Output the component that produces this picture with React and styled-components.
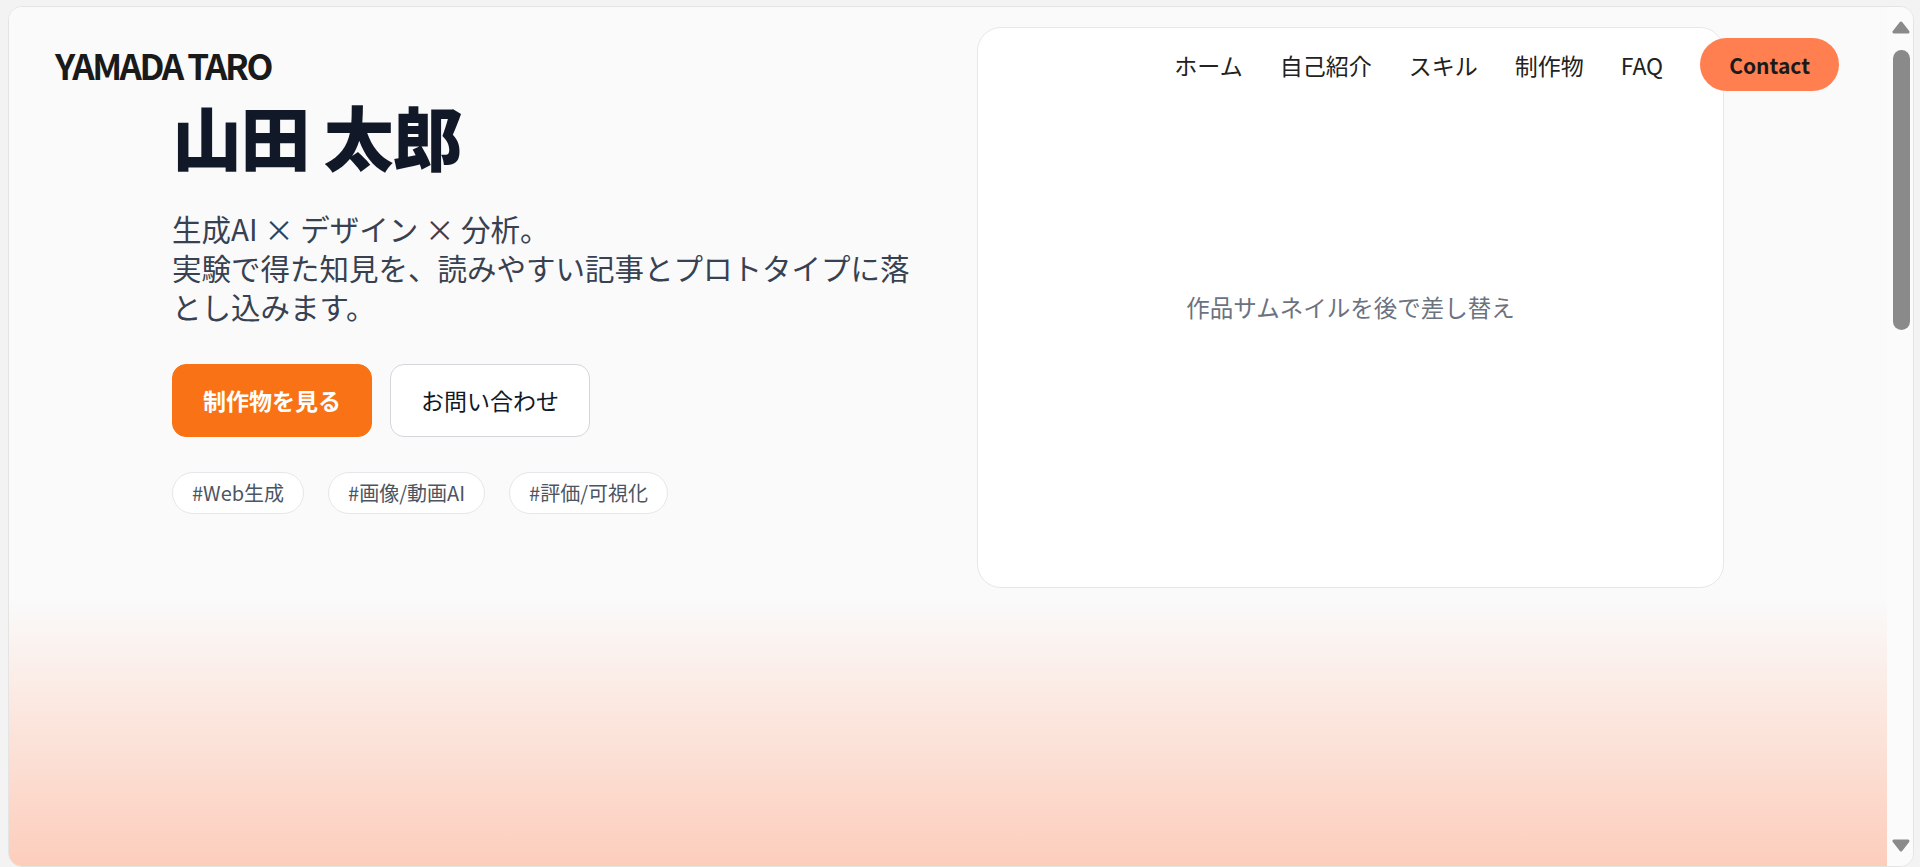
import React from "react";
import styled, { createGlobalStyle, css } from "styled-components";

const GlobalStyle = createGlobalStyle`
  html, body {
    margin: 0;
    height: 100%;
  }
  body {
    background: #f3f3f3;
    font-family: "Noto Sans CJK JP", "Noto Sans", sans-serif;
    overflow: hidden;
  }
  #root {
    height: 100%;
  }
`;

const Frame = styled.div`
  box-sizing: border-box;
  height: calc(100vh - 6px);
  margin: 6px 6px 0 8px;
  border: 1px solid #e4e4e4;
  border-radius: 14px;
  overflow: hidden;
  display: flex;
  background: #fafafa;
`;

const Viewport = styled.main`
  flex: 1;
  position: relative;
  overflow: hidden;
  background: linear-gradient(180deg, #fafafa 0, #fafafa 593px, #fdcdbb 860px);
`;

const Header = styled.header`
  position: absolute;
  top: 0;
  left: 0;
  right: 0;
  z-index: 2;
  display: flex;
  align-items: center;
  justify-content: space-between;
  padding: 31px 48px 0 46px;
`;

const Logo = styled.div`
  font-size: 35px;
  font-weight: 700;
  letter-spacing: -0.07em;
  color: #1a1a1a;
  line-height: 1;
`;

const Nav = styled.nav`
  display: flex;
  align-items: center;
  gap: 37px;
`;

const NavLink = styled.a`
  font-size: 23px;
  color: #222;
  text-decoration: none;
`;

const ContactButton = styled.a`
  display: inline-flex;
  align-items: center;
  height: 53px;
  padding: 0 29px;
  border-radius: 999px;
  background: #ff7f50;
  color: #1a1a1a;
  font-size: 21px;
  font-weight: 700;
  text-decoration: none;
`;

const Hero = styled.section`
  display: grid;
  grid-template-columns: 747px 747px;
  justify-content: center;
  gap: 58px;
  align-items: center;
  padding-top: 20px;
`;

const Intro = styled.div`
  display: flex;
  flex-direction: column;
  align-items: flex-start;
`;

const Title = styled.h1`
  margin: 0 0 38px;
  font-size: 70px;
  line-height: 70px;
  font-weight: 800;
  letter-spacing: -0.02em;
  color: #111827;
`;

const Lead = styled.p`
  margin: 0 0 38px;
  font-size: 29.5px;
  line-height: 39px;
  color: #374151;
`;

const Actions = styled.div`
  display: flex;
  gap: 18px;
  margin-bottom: 35px;
`;

const Button = styled.a`
  box-sizing: border-box;
  display: inline-flex;
  align-items: center;
  height: 73px;
  padding: 0 30px;
  border-radius: 14px;
  font-size: 23px;
  text-decoration: none;
  border: 1px solid #d4d6dc;
  background: #fff;
  color: #111827;

  ${props => props.primary && css`
    border-color: #f97316;
    background: #f97316;
    color: #fff;
    font-weight: 700;
  `}
`;

const Tags = styled.div`
  display: flex;
  gap: 24px;
`;

const Tag = styled.span`
  box-sizing: border-box;
  display: inline-flex;
  align-items: center;
  height: 42px;
  padding: 0 19px;
  border-radius: 999px;
  border: 1px solid #e5e7eb;
  background: #fff;
  color: #4b5563;
  font-size: 20px;
`;

const Thumb = styled.div`
  aspect-ratio: 4 / 3;
  display: flex;
  align-items: center;
  justify-content: center;
  background: #fff;
  border: 1px solid #e5e7eb;
  border-radius: 24px;
  color: #6b7280;
  font-size: 23.5px;
`;

const Scrollbar = styled.div`
  width: 26px;
  display: flex;
  flex-direction: column;
  align-items: center;
  padding: 14px 0 14px 2px;
  box-sizing: border-box;
  background: #fbfbfb;
`;

const ScrollThumb = styled.div`
  width: 17px;
  height: 280px;
  margin-top: 16px;
  border-radius: 9px;
  background: #8a8a8a;
`;

const Spacer = styled.div`
  flex: 1;
`;

const Arrow = ({ down }) => (
  <svg width="18" height="13" viewBox="0 0 18 13">
    <polygon
      points={down ? "2,2 16,2 9,11" : "2,11 16,11 9,2"}
      fill="#8a8a8a"
      stroke="#8a8a8a"
      strokeWidth="3"
      strokeLinejoin="round"
    />
  </svg>
);

const navItems = ["ホーム", "自己紹介", "スキル", "制作物", "FAQ"];
const tags = ["#Web生成", "#画像/動画AI", "#評価/可視化"];

export default function App() {
  return (
    <>
      <GlobalStyle />
      <Frame>
        <Viewport>
          <Header>
            <Logo>YAMADA TARO</Logo>
            <Nav>
              {navItems.map(item => (
                <NavLink key={item} href="#">{item}</NavLink>
              ))}
              <ContactButton href="#">Contact</ContactButton>
            </Nav>
          </Header>
          <Hero>
            <Intro>
              <Title>山田 太郎</Title>
              <Lead>
                生成AI × デザイン × 分析。<br />
                実験で得た知見を、読みやすい記事とプロトタイプに落とし込みます。
              </Lead>
              <Actions>
                <Button primary href="#">制作物を見る</Button>
                <Button href="#">お問い合わせ</Button>
              </Actions>
              <Tags>
                {tags.map(t => <Tag key={t}>{t}</Tag>)}
              </Tags>
            </Intro>
            <Thumb>作品サムネイルを後で差し替え</Thumb>
          </Hero>
        </Viewport>
        <Scrollbar>
          <Arrow />
          <ScrollThumb />
          <Spacer />
          <Arrow down />
        </Scrollbar>
      </Frame>
    </>
  );
}
